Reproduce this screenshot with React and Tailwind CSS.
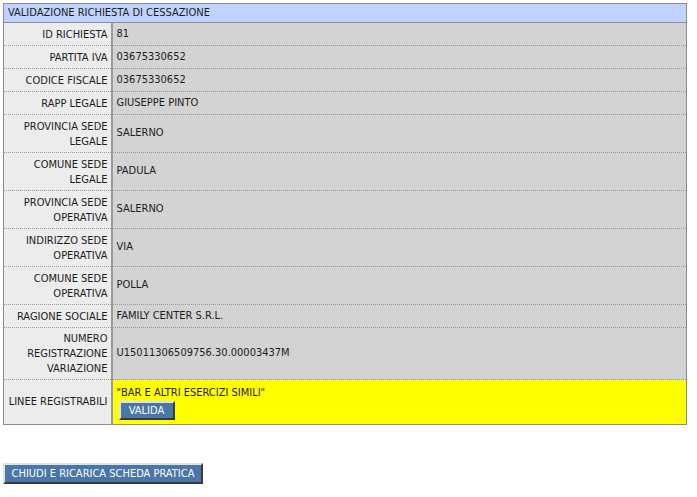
import React from "react"

const rows = [
  { label: ["ID RICHIESTA"], value: "81" },
  { label: ["PARTITA IVA"], value: "03675330652" },
  { label: ["CODICE FISCALE"], value: "03675330652" },
  { label: ["RAPP LEGALE"], value: "GIUSEPPE PINTO" },
  { label: ["PROVINCIA SEDE", "LEGALE"], value: "SALERNO" },
  { label: ["COMUNE SEDE", "LEGALE"], value: "PADULA" },
  { label: ["PROVINCIA SEDE", "OPERATIVA"], value: "SALERNO" },
  { label: ["INDIRIZZO SEDE", "OPERATIVA"], value: "VIA" },
  { label: ["COMUNE SEDE", "OPERATIVA"], value: "POLLA" },
  { label: ["RAGIONE SOCIALE"], value: "FAMILY CENTER S.R.L." },
  { label: ["NUMERO", "REGISTRAZIONE", "VARIAZIONE"], value: "U15011306509756.30.00003437M" },
]

const btn =
  "bg-[#4a76aa] text-white text-[11px] leading-none border-2 border-t-[#dde3ec] border-l-[#dde3ec] border-r-[#3a3a3a] border-b-[#3a3a3a]"

const label =
  "w-[108px] bg-[#ececec] text-right pr-[3px] pl-[2px] border-r-2 border-r-[#9a9a9a] border-b border-b-[#999]"

const pad = { 1: "h-[23px]", 2: "pt-[4px] pb-[3px]", 3: "py-[3px]" }

const App = () => {
  return (
    <div className="bg-white w-[697px] h-[497px] pt-[3px] pl-[3px] text-[11px] text-[#1c1c1c] font-['DejaVu_Sans_Condensed','DejaVu_Sans',sans-serif]">
      <table className="w-[684px] border-collapse border border-[#8c8c8c]">
        <tbody>
          <tr>
            <td colSpan={2} className="bg-[#c0d2ff] h-[19px] px-[4px] border-b border-[#8c8c8c]">
              VALIDAZIONE RICHIESTA DI CESSAZIONE
            </td>
          </tr>
          {rows.map((r, i) => (
            <tr key={i}>
              <td
                className={`${label} leading-[15px] ${pad[r.label.length]}`}
                style={{ borderRightStyle: "solid", borderBottomStyle: "dotted" }}
              >
                {r.label.map((l, j) => (
                  <div key={j}>{l}</div>
                ))}
              </td>
              <td className="bg-[#d3d3d3] pl-[4px] border-b border-dotted border-[#999]">{r.value}</td>
            </tr>
          ))}
          <tr>
            <td className={`${label} h-[45px]`} style={{ borderRightStyle: "solid", borderBottomStyle: "dotted" }}>
              LINEE REGISTRABILI
            </td>
            <td className="bg-[#ffff00] pl-[4px] border-b border-dotted border-[#999] align-top pt-[6px]">
              <div className="leading-[13px]">"BAR E ALTRI ESERCIZI SIMILI"</div>
              <button className={`${btn} ml-[2px] mt-[2px] w-[56px] h-[19px]`}>VALIDA</button>
            </td>
          </tr>
        </tbody>
      </table>
      <div className="mt-[38px]">
        <button className={`${btn} w-[200px] h-[21px]`}>CHIUDI E RICARICA SCHEDA PRATICA</button>
      </div>
    </div>
  )
}

export default App
